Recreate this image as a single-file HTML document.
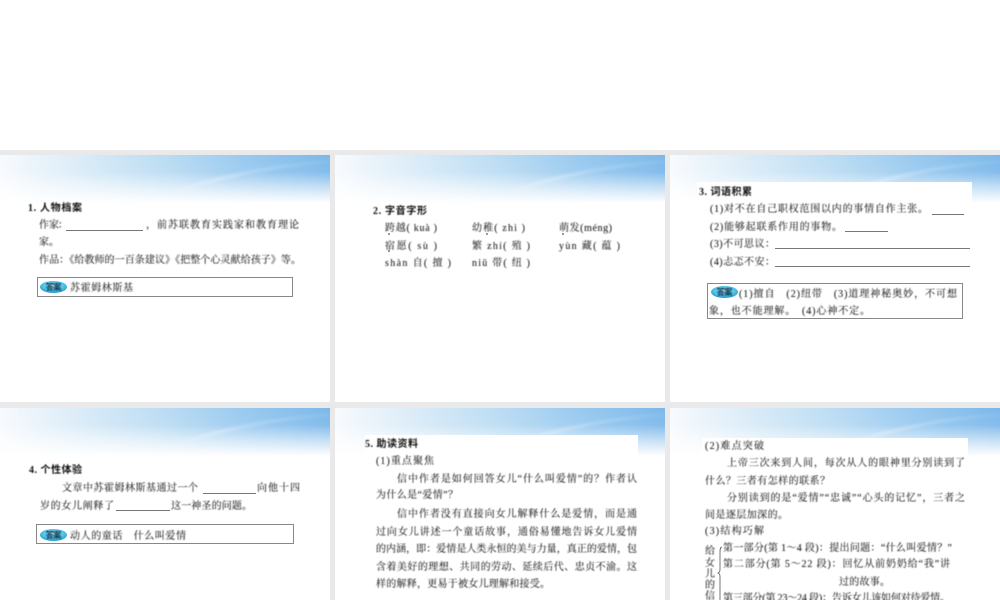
<!DOCTYPE html>
<html lang="zh">
<head>
<meta charset="utf-8">
<style>
html,body{margin:0;padding:0;width:1000px;height:600px;overflow:hidden;background:#fff}
svg{display:block}
text{font-family:"Liberation Serif","Noto Serif CJK SC",serif;font-size:10px;fill:#1c1c1c;stroke:#1c1c1c;stroke-width:.07px}
text.t{font-family:"Liberation Serif","Noto Sans CJK SC",sans-serif;font-size:10px;font-weight:700;fill:#111;stroke:none}
text.b{font-size:8.5px;font-family:"Liberation Sans","Noto Sans CJK SC",sans-serif;font-weight:700;fill:#0a3550;stroke:none}
</style>
</head>
<body>
<svg width="1000" height="600" viewBox="0 0 1000 600" xmlns="http://www.w3.org/2000/svg">
<defs>
<linearGradient id="h" x1="0" x2="1" y1="0" y2="0">
<stop offset="0" stop-color="#f8fbfe"/>
<stop offset=".1" stop-color="#ebf4fb"/>
<stop offset=".3" stop-color="#d3e8f7"/>
<stop offset=".5" stop-color="#bbdcf3"/>
<stop offset=".75" stop-color="#98c9ef"/>
<stop offset="1" stop-color="#7cb8ea"/>
</linearGradient>
<linearGradient id="f" x1="0" x2="0" y1="0" y2="1">
<stop offset="0" stop-color="#fff" stop-opacity="0"/>
<stop offset=".35" stop-color="#fff" stop-opacity=".06"/>
<stop offset=".7" stop-color="#fff" stop-opacity=".6"/>
<stop offset="1" stop-color="#fff"/>
</linearGradient>
<linearGradient id="w" x1="0" x2="1" y1="0" y2="0">
<stop offset="0" stop-color="#fff" stop-opacity="0"/>
<stop offset=".3" stop-color="#fff" stop-opacity=".28"/>
<stop offset="1" stop-color="#fff" stop-opacity=".05"/>
</linearGradient>
<radialGradient id="bd" cx=".5" cy=".4" r=".65">
<stop offset="0" stop-color="#b8eef8"/>
<stop offset=".65" stop-color="#45bfe6"/>
<stop offset="1" stop-color="#1b86c0"/>
</radialGradient>
<filter id="s" x="-10%" y="-30%" width="120%" height="160%"><feGaussianBlur stdDeviation="1.2"/></filter>
<filter id="tb" x="0" y="0" width="100%" height="100%"><feGaussianBlur stdDeviation=".4"/></filter>
<g id="hd">
<rect width="330" height="48" fill="url(#h)"/>
<path d="M165 38C205 24 260 10 330 5V8C265 13 215 26 175 38Z" fill="url(#w)" filter="url(#s)"/>
<rect width="330" height="48" fill="url(#f)"/>
</g>
<g id="bg">
<ellipse cx="13.5" cy="6" rx="13.5" ry="6" fill="url(#bd)"/>
</g>
</defs>

<rect y="150" width="1000" height="450" fill="#e9e9e9"/>
<rect x="0" y="155" width="330" height="247" fill="#fff"/>
<rect x="335" y="155" width="330" height="247" fill="#fff"/>
<rect x="670" y="155" width="330" height="247" fill="#fff"/>
<rect x="0" y="408" width="330" height="192" fill="#fff"/>
<rect x="335" y="408" width="330" height="192" fill="#fff"/>
<rect x="670" y="408" width="330" height="192" fill="#fff"/>

<use href="#hd" x="0" y="155"/>
<use href="#hd" x="335" y="155"/>
<use href="#hd" x="670" y="155"/>
<use href="#hd" x="0" y="408"/>
<use href="#hd" x="335" y="408"/>
<use href="#hd" x="670" y="408"/>

<!-- white text panels over headers -->
<rect x="697" y="182" width="275" height="30" fill="#fff"/>
<rect x="365" y="435" width="273" height="30" fill="#fff"/>
<rect x="702" y="438" width="266" height="30" fill="#fff"/>

<!-- badges -->
<use href="#bg" x="40" y="281"/>
<use href="#bg" x="711" y="286"/>
<use href="#bg" x="40" y="529"/>

<g filter="url(#tb)">
<!-- Slide 1 -->
<text class="t" x="28" y="211" textLength="54">1. 人物档案</text>
<text x="39" y="228" textLength="20">作家</text>
<text x="58" y="228">：</text>
<text x="146" y="228" textLength="153">，前苏联教育实践家和教育理论</text>
<text x="39" y="245">家。</text>
<text x="39" y="263" textLength="262">作品：《给教师的一百条建议》《把整个心灵献给孩子》等。</text>
<text x="70" y="291" textLength="63">苏霍姆林斯基</text>

<!-- Slide 2 -->
<text class="t" x="373" y="214" textLength="54">2. 字音字形</text>
<text x="385" y="231" textLength="52">跨越( kuà )</text>
<text x="472" y="231" textLength="53">幼稚( zhì )</text>
<text x="559" y="231" textLength="53">萌发(méng)</text>
<text x="385" y="249" textLength="52">宿愿( sù )</text>
<text x="472" y="249" textLength="58">繁 zhí( 殖 )</text>
<text x="559" y="249" textLength="61">yùn 藏( 蕴 )</text>
<text x="385" y="266" textLength="66">shàn 自( 擅 )</text>
<text x="472" y="266" textLength="58">niǔ 带( 纽 )</text>

<!-- Slide 3 -->
<text class="t" x="699" y="195" textLength="53">3. 词语积累</text>
<text x="710" y="212" textLength="218">(1)对不在自己职权范围以内的事情自作主张。</text>
<text x="710" y="230" textLength="132">(2)能够起联系作用的事物。</text>
<text x="710" y="247" textLength="65">(3)不可思议：</text>
<text x="710" y="265" textLength="65">(4)忐忑不安：</text>
<text x="739" y="297" textLength="218">(1)擅自　(2)纽带　(3)道理神秘奥妙，不可想</text>
<text x="709" y="314" textLength="161">象，也不能理解。　(4)心神不定。</text>

<!-- Slide 4 -->
<text class="t" x="29" y="473" textLength="53">4. 个性体验</text>
<text x="62" y="491" textLength="136">文章中苏霍姆林斯基通过一个</text>
<text x="257" y="491" textLength="43">向他十四</text>
<text x="40" y="509" textLength="74">岁的女儿阐释了</text>
<text x="171" y="509" textLength="81">这一神圣的问题。</text>
<text x="70" y="539" textLength="116">动人的童话　什么叫爱情</text>

<!-- Slide 5 -->
<text class="t" x="365" y="447" textLength="53">5. 助读资料</text>
<text x="376" y="464" textLength="58">(1)重点聚焦</text>
<text x="397" y="482" textLength="240">信中作者是如何回答女儿“什么叫爱情”的？作者认</text>
<text x="376" y="498" textLength="82">为什么是“爱情”？</text>
<text x="397" y="517" textLength="240">信中作者没有直接向女儿解释什么是爱情，而是通</text>
<text x="376" y="535" textLength="261">过向女儿讲述一个童话故事，通俗易懂地告诉女儿爱情</text>
<text x="376" y="552" textLength="261">的内涵，即：爱情是人类永恒的美与力量，真正的爱情，包</text>
<text x="376" y="570" textLength="261">含着美好的理想、共同的劳动、延续后代、忠贞不渝。这</text>
<text x="376" y="587" textLength="174">样的解释，更易于被女儿理解和接受。</text>

<!-- Slide 6 -->
<text x="705" y="449" textLength="59">(2)难点突破</text>
<text x="727" y="466" textLength="238">上帝三次来到人间，每次从人的眼神里分别读到了</text>
<text x="705" y="484" textLength="125">什么？三者有怎样的联系？</text>
<text x="727" y="501" textLength="238">分别读到的是“爱情”“忠诚”“心头的记忆”，三者之</text>
<text x="705" y="518" textLength="83">间是逐层加深的。</text>
<text x="705" y="534" textLength="59">(3)结构巧解</text>
<text x="705" y="554">给</text>
<text x="705" y="566">女</text>
<text x="705" y="577">儿</text>
<text x="705" y="588">的</text>
<text x="705" y="599">信</text>
<text x="723" y="551" textLength="229">第一部分(第 1～4 段)：提出问题：“什么叫爱情？”</text>
<text x="723" y="567" textLength="227">第二部分(第 5～22 段)：回忆从前奶奶给“我”讲</text>
<text x="839" y="585" textLength="51">过的故事。</text>
<text x="723" y="601" textLength="227">第三部分(第 23～24 段)：告诉女儿该如何对待爱情。</text>

<text class="b" x="45.500" y="290" textLength="16">答案</text>
<text class="b" x="716.500" y="295" textLength="16">答案</text>
<text class="b" x="45.500" y="538" textLength="16">答案</text>
</g>

<!-- underlines -->
<g stroke="#777" stroke-width="1" fill="none">
<path d="M66 230.500H143M932 214.500H964M845 231.500H888M775 248.500H970M775 266.500H970M203 493.500H256M116 510.500H170"/>
<path d="M722 547C720 547 720 550 720 553V569C720 571 720 572 718 573C720 574 720 575 720 577V600" stroke="#555" stroke-width=".8"/>
</g>

<!-- dotted boxes -->
<g fill="none" stroke="#111" stroke-width="1" stroke-dasharray="1 1">
<rect x="37.500" y="277.500" width="255" height="19"/>
<rect x="707.500" y="283.500" width="255" height="35"/>
<rect x="36.500" y="524.500" width="257" height="19"/>
</g>

<!-- pronunciation dots -->
<g fill="#222">
<circle cx="389" cy="234" r=".8"/>
<circle cx="487" cy="234" r=".8"/>
<circle cx="563" cy="234" r=".8"/>
<circle cx="389" cy="251" r=".8"/>
</g>
</svg>
</body>
</html>
